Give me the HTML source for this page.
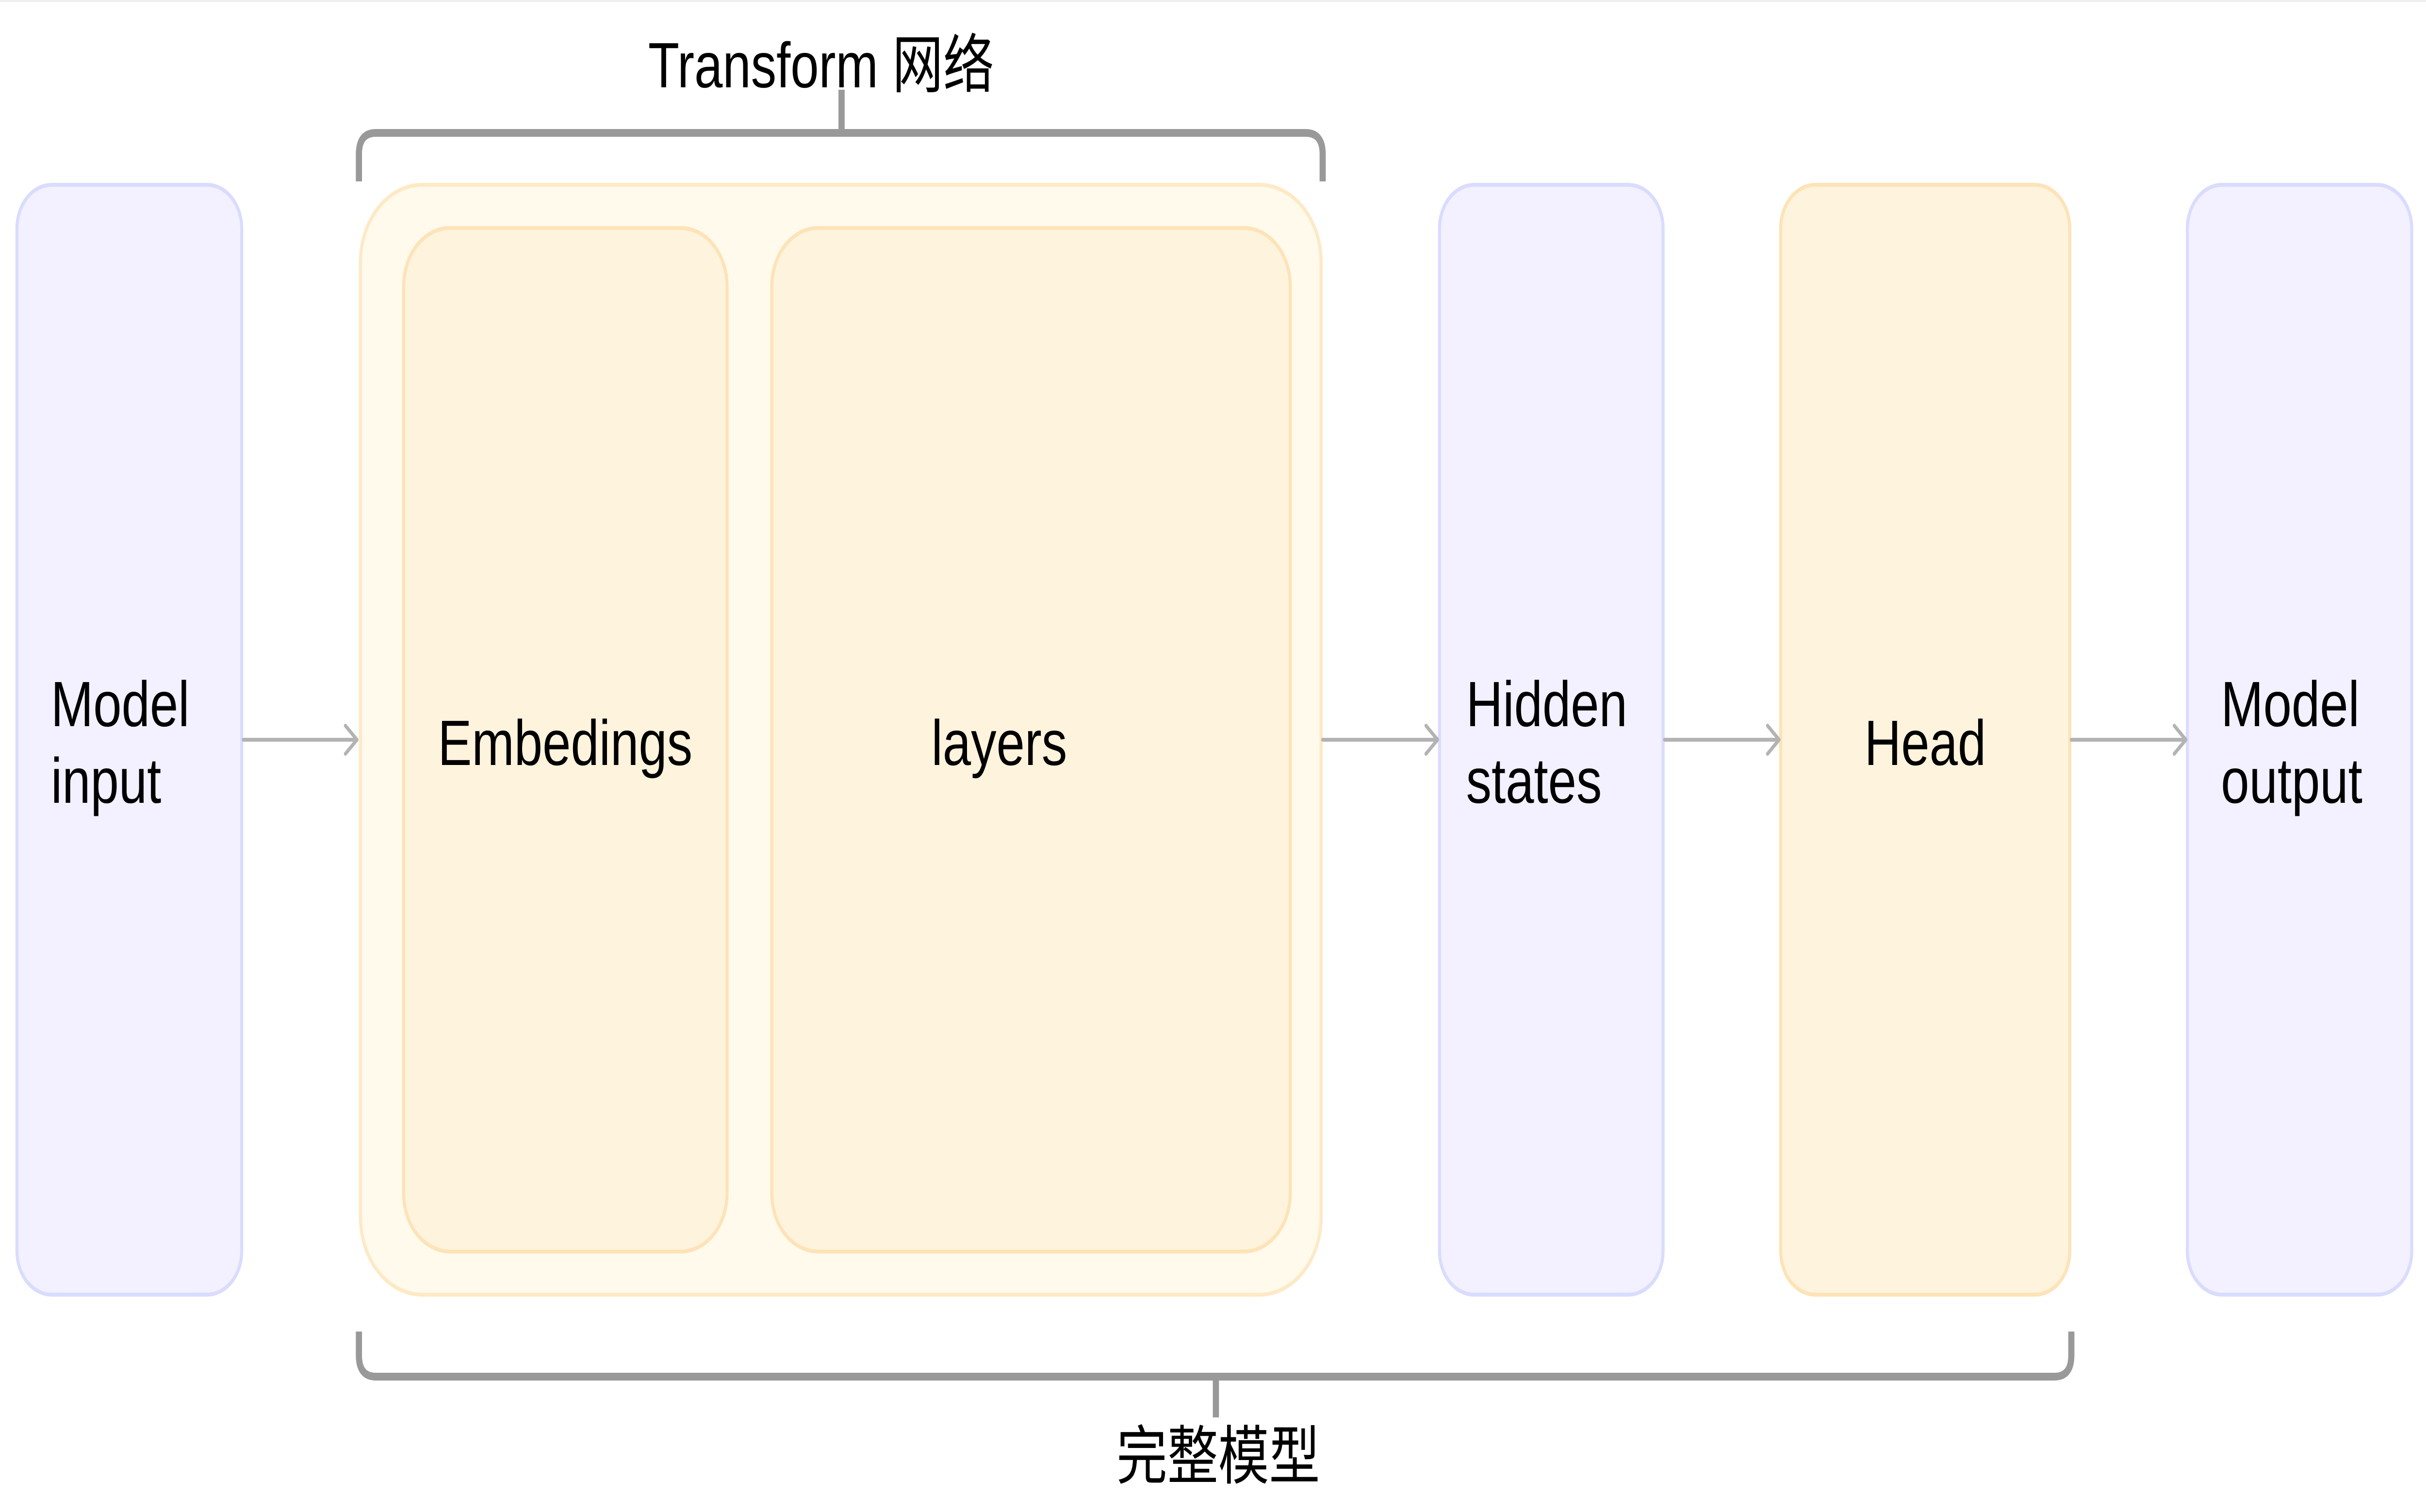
<!DOCTYPE html>
<html><head><meta charset="utf-8"><style>
html,body{margin:0;padding:0;background:#fff;overflow:hidden;width:100%;height:100%;}
svg{display:block;width:100vw;height:100vh;}
text{font-family:"Liberation Sans","Noto Sans CJK SC",sans-serif;fill:#000;}
</style></head><body>
<svg viewBox="0 0 6293 3117" preserveAspectRatio="none" xmlns="http://www.w3.org/2000/svg">
<line x1="0" y1="2" x2="6293" y2="2" stroke="#eeeeee" stroke-width="4"/>
<rect x="44" y="381" width="583" height="2288" rx="90" fill="#f3f0ff" stroke="#d9dcfd" stroke-width="8"/>
<rect x="935" y="381" width="2492" height="2288" rx="160" fill="#fffaeb" stroke="#fee9c6" stroke-width="8"/>
<rect x="1047" y="470" width="839" height="2110" rx="120" fill="#fef3dc" stroke="#fde3b8" stroke-width="8"/>
<rect x="2002" y="470" width="1345" height="2110" rx="120" fill="#fef3dc" stroke="#fde3b8" stroke-width="8"/>
<rect x="3734" y="381" width="580" height="2288" rx="90" fill="#f3f0ff" stroke="#d9dcfd" stroke-width="8"/>
<rect x="4619" y="381" width="750" height="2288" rx="90" fill="#fef3dc" stroke="#fde3b8" stroke-width="8"/>
<rect x="5674" y="381" width="582" height="2288" rx="90" fill="#f3f0ff" stroke="#d9dcfd" stroke-width="8"/>
<g stroke="#b3b3b3" stroke-width="8" fill="none" stroke-linecap="round" stroke-linejoin="round">
<path d="M631 1525H925M896 1496L926 1525L896 1554"/>
<path d="M3431 1525H3728M3699 1496L3729 1525L3699 1554"/>
<path d="M4318 1525H4614M4585 1496L4615 1525L4585 1554"/>
<path d="M5373 1525H5669M5640 1496L5670 1525L5640 1554"/>
</g>
<g stroke="#999999" stroke-width="16" fill="none">
<path d="M931 374V318Q931 274 975 274H3387Q3431 274 3431 318V374"/>
<path d="M2183 185V274"/>
<path d="M931 2745V2794Q931 2838 975 2838H5329Q5373 2838 5373 2794V2745"/>
<path d="M3154 2838V2922"/>
</g>
<g font-size="132">
<text x="2130" y="180" text-anchor="middle">Transform 网络</text>
<text x="132" y="1497">Model</text>
<text x="132" y="1655">input</text>
<text x="1466" y="1577" text-anchor="middle">Embedings</text>
<text x="2592" y="1577" text-anchor="middle">layers</text>
<text x="3803" y="1497">Hidden</text>
<text x="3803" y="1655">states</text>
<text x="4994" y="1577" text-anchor="middle">Head</text>
<text x="5761" y="1497">Model</text>
<text x="5761" y="1655">output</text>
<text x="3160" y="3048" text-anchor="middle">完整模型</text>
</g>
</svg>
</body></html>
